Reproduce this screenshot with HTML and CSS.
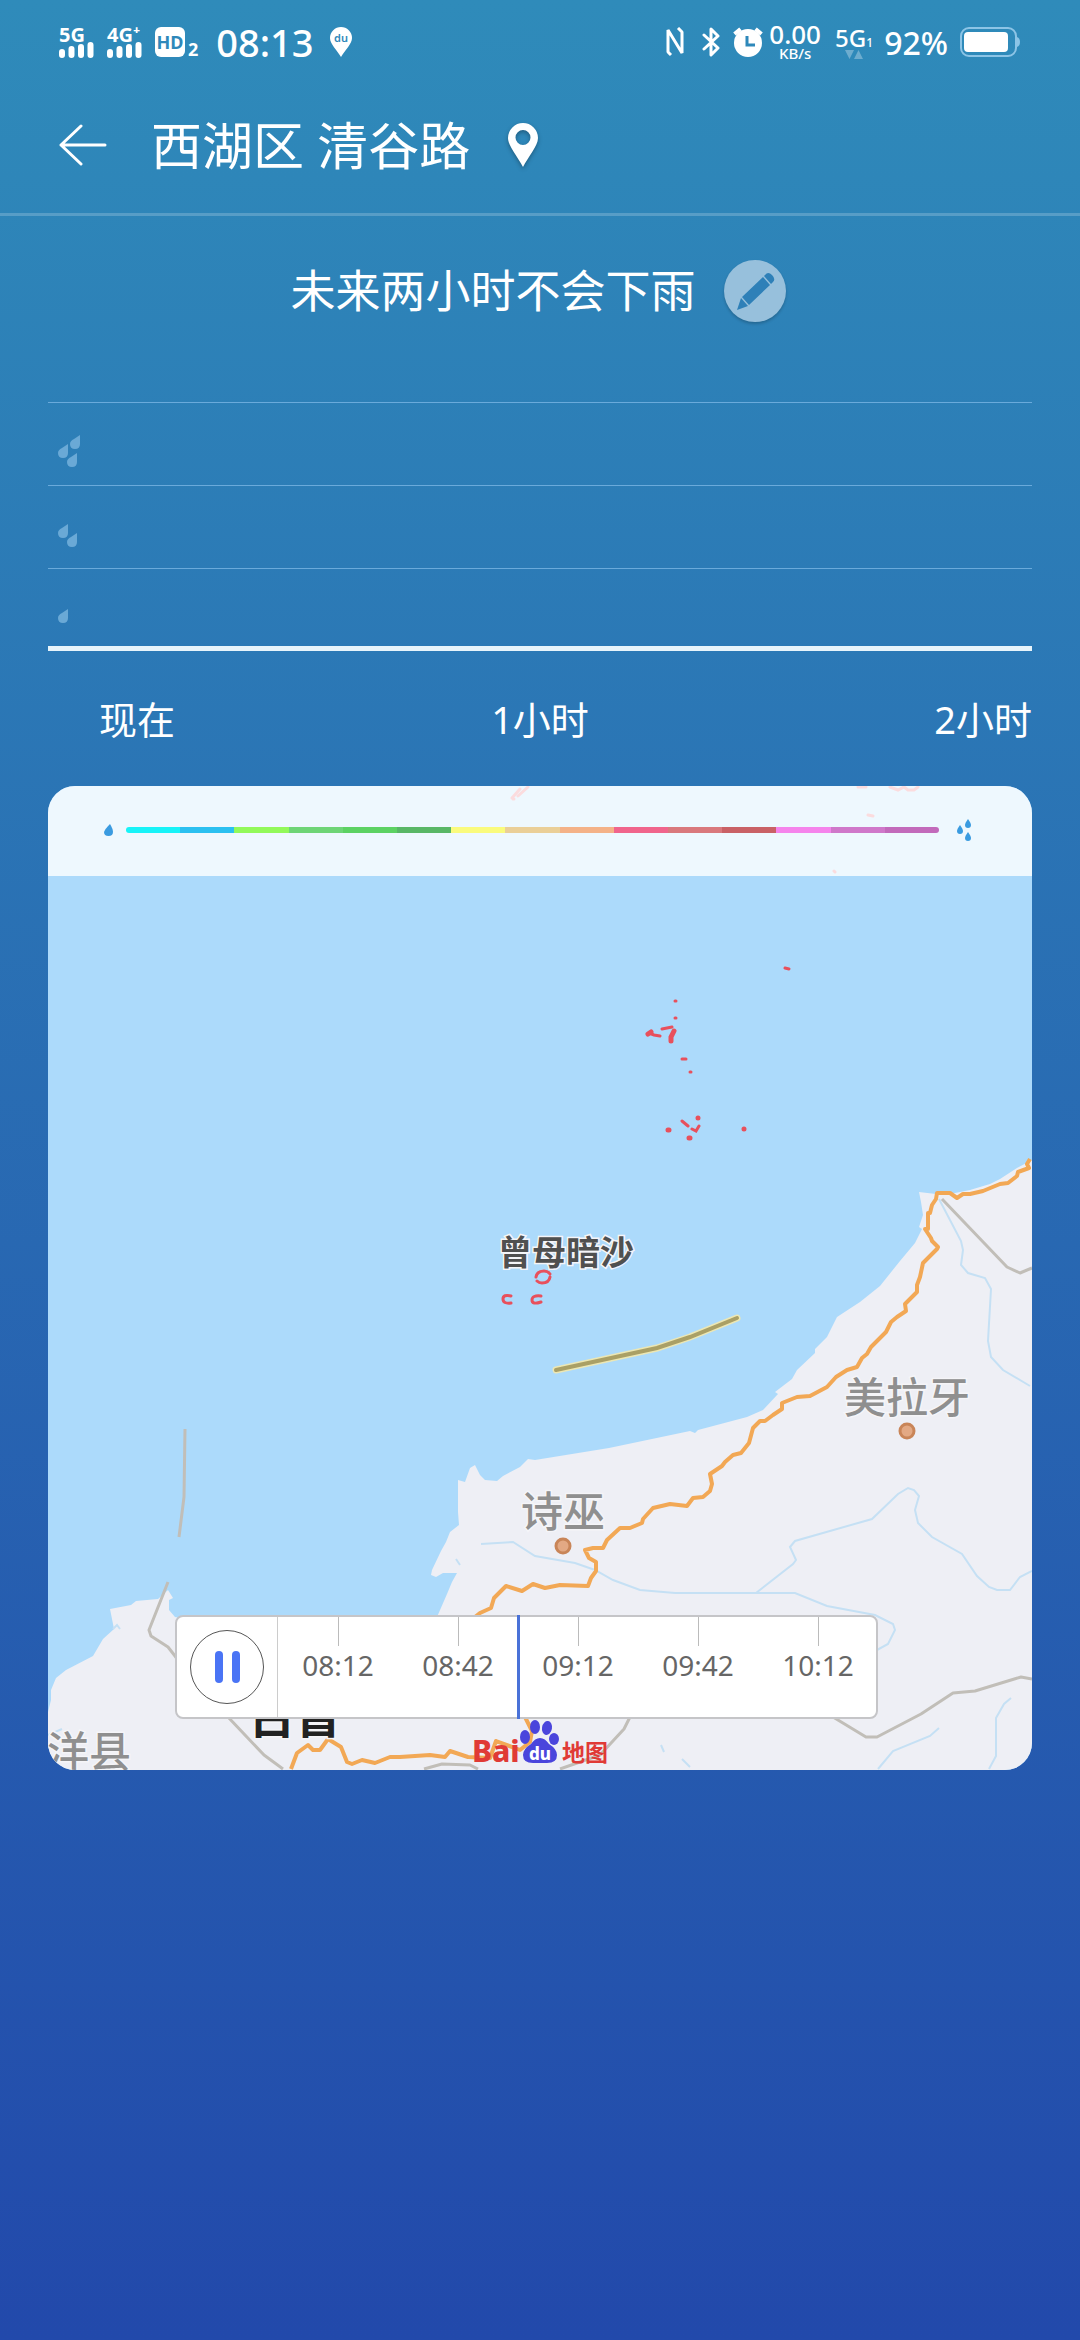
FILE: index.html
```html
<!DOCTYPE html>
<html lang="zh-CN">
<head>
<meta charset="utf-8">
<meta name="viewport" content="width=device-width, initial-scale=1">
<title>西湖区 清谷路</title>
<link rel="stylesheet" href="styles.css">
</head>
<body>
<div class="status">
  <div class="status-group">
    <div class="signal"><span>5G</span>
      <svg width="35" height="16" viewBox="0 0 35 16"><path d="M3 10v3M12.500 7v6M22 5v8M31.500 3v10" stroke="#fff" stroke-width="6" stroke-linecap="round"/></svg>
    </div>
    <div class="signal"><span>4G⁺</span>
      <svg width="35" height="16" viewBox="0 0 35 16"><path d="M3 10v3M12.500 7v6M22 5v8M31.500 3v10" stroke="#fff" stroke-width="6" stroke-linecap="round"/></svg>
    </div>
    <div class="hd"><b class="hd-badge">HD</b><b>2</b></div>
    <time class="clock">08:13</time>
    <svg width="22" height="30" viewBox="0 0 22 30"><path d="M11 0a11 11 0 0 1 11 11c0 6-7 12-11 19C7 23 0 17 0 11A11 11 0 0 1 11 0z" fill="#fff"/><text x="11" y="15" text-anchor="middle" class="pin-text">du</text></svg>
  </div>
  <div class="status-group status-right">
    <svg class="nfc" width="18" height="30" viewBox="0 0 18 30" fill="none" stroke="#fff" stroke-width="3"><path d="M5 28L2 25V3l14 23V5l-4-4" stroke-linejoin="bevel"/></svg>
    <svg class="bt" width="18" height="30" viewBox="0 0 18 30" fill="none" stroke="#fff" stroke-width="3" stroke-linejoin="round" stroke-linecap="round"><path d="M2 8l14 13-7 7V2l7 7L2 22"/></svg>
    <svg class="alarm" width="30" height="30" viewBox="0 0 30 30"><circle cx="15" cy="16" r="14" fill="#fff"/><path d="M14 9v9h8" fill="none" stroke="#2e88ba" stroke-width="3"/><path d="M1.500 7l6-5M28.500 7l-6-5" stroke="#fff" stroke-width="4"/></svg>
    <div class="speed"><span>0.00</span><small>KB/s</small></div>
    <div class="net"><span>5G<sub>1</sub></span>
      <svg width="18" height="9" viewBox="0 0 18 9" fill="#fff" fill-opacity=".3"><path d="M0 0h9L4.500 9zM9 9h9L13.500 0z"/></svg>
    </div>
    <span class="percent">92%</span>
    <svg width="60" height="30" viewBox="0 0 60 30"><rect x="1" y="1" width="55" height="28" rx="8" fill="none" stroke="#8cc4e6" stroke-width="2"/><rect x="4" y="5" width="44" height="20" rx="4" fill="#fff"/><path d="M57 10q3 1 3 5t-3 5z" fill="#8cc4e6"/></svg>
  </div>
</div>

<header class="header">
  <button class="icon-button" aria-label="返回">
    <svg width="48" height="42" viewBox="0 0 48 42" fill="none" stroke="#fff" stroke-width="3" stroke-linecap="round" stroke-linejoin="round"><path d="M22 2L2 21l20 19M2 21h44"/></svg>
  </button>
  <h1 class="title">西湖区 清谷路</h1>
  <button class="icon-button shadow" aria-label="定位">
    <svg width="30" height="44" viewBox="0 0 30 44"><path fill-rule="evenodd" fill="#fff" d="M15 0a15 15 0 0 1 15 15c0 8-10 19-15 29C10 34 0 23 0 15A15 15 0 0 1 15 0zm0 7a7.500 7.500 0 1 0 0 15 7.500 7.500 0 0 0 0-15z"/></svg>
  </button>
</header>

<main>
  <section class="summary">
    <h2 class="forecast">未来两小时不会下雨</h2>
    <button class="edit" aria-label="编辑">
      <svg width="62" height="62" viewBox="0 0 62 62" fill="#2e80b8"><path d="M39 17l7 8-21 20-7-8zM41 15q3-4 7 0 4 4 1 7l-2 2-7-8zM17 38l7 8-11 4z"/></svg>
    </button>
  </section>

  <section class="chart" aria-label="降雨量">
    <div class="level"><svg width="22" height="32" viewBox="0 0 22 32"><use href="#drop" x="12" y="0"/><use href="#drop" x="0" y="9"/><use href="#drop" x="9" y="18"/></svg></div>
    <div class="level low"><svg width="22" height="32" viewBox="0 0 22 32"><use href="#drop" x="0" y="9"/><use href="#drop" x="9" y="18"/></svg></div>
    <div class="level base"><svg width="22" height="32" viewBox="0 0 22 32"><use href="#drop" x="0" y="8"/></svg></div>
  </section>
  <div class="axis"><span class="now">现在</span><span>1小时</span><span class="end">2小时</span></div>

  <section class="map">
    <svg class="map-canvas" viewBox="48 786 984 984" aria-label="降雨地图">
      <defs>
        <path id="drop" d="M10 0v9q0 5-5 5t-5-5q0-3 4-5z"/>
        <path id="water" d="M6 0q3 5 3 8 0 4-4.500 4T0 8q1-3 6-8z"/>
      </defs>
      <rect x="48" y="786" width="984" height="984" fill="#acdafb"/>
      <path fill="#eeeff5" d="M1032 1160L1017 1168 1000 1179 990 1184 970 1190 955 1193 936 1194 919 1192 921 1202 923 1215 919 1227 922 1229 915 1243 900 1261 880 1286 860 1302 837 1317 827 1337 815 1349 815 1353 797 1370 792 1379 775 1392 778 1394 763 1410 747 1417 698 1430 695 1433 690 1431 609 1448 535 1460 528 1459 520 1467 503 1476 497 1481 485 1480 480 1475 475 1465 470 1468 465 1482 458 1480 458 1512 459 1525 450 1532 446 1542 441 1551 432 1570 431 1575 436 1577 443 1573 457 1573 452 1582 447 1594 437 1617 300 1640 175 1617 169 1610 169 1600 173 1598 168 1590 158 1599 136 1601 131 1605 110 1609 114 1629 103 1639 93 1656 66 1670 56 1678 51 1690 51 1700 48 1712V1770H1032z"/>
      <g class="river">
        <path d="M939 1199L961 1241 963 1250 961 1265 968 1273 985 1278 991 1289 988 1341 991 1357 1003 1370 1030 1386"/>
        <path d="M481 1544L513 1542 535 1556 575 1563 595 1570 613 1580 640 1590 675 1593H795L827 1606 875 1615 893 1624 895 1630 888 1644 877 1650"/>
        <path d="M756 1593L793 1564 796 1560 790 1547 795 1541 872 1519 898 1494 908 1488 914 1490 919 1496 915 1510 918 1523 932 1537 962 1554 977 1576 989 1587 997 1590H1010L1020 1577 1032 1571"/>
        <path d="M878 1769L893 1751 930 1736 939 1728M989 1769L996 1756V1718L1004 1704 1011 1698M113 1629l4-4 3 4M456 1559l4 6M48 1735l14-6M661 1745l3 7M682 1759l8 8"/>
      </g>
      <g class="border-line">
        <path d="M185 1429L184 1497 179 1537M168 1582L149 1630 151 1636 168 1647 175 1656 200 1690 228 1717 245 1735 264 1755 283 1769"/>
        <path d="M942 1199L1007 1267 1020 1273 1032 1268M833 1717L866 1737H877L921 1714 953 1693 975 1691 1021 1677 1032 1679M424 1769L442 1764 470 1765 478 1769M630 1717L624 1729 600 1755 560 1769"/>
      </g>
      <g class="road">
        <path d="M1030 1159L1027 1164 1029 1168 1018 1172 1017 1176 1008 1183 1000 1184 983 1191 970 1194 963 1194 957 1198 950 1193H937L936 1199 932 1205 930 1213H928V1229H925L931 1238 932 1241 938 1247 937 1249 923 1263 920 1277 917 1285V1292L905 1304 906 1311 897 1317 891 1322 886 1332 871 1347 867 1354 862 1358 857 1367 847 1370 836 1377 827 1387 810 1396 797 1397 782 1403V1409L773 1415 765 1421H760L753 1428 749 1443 741 1453 733 1455 725 1462 722 1466 710 1474 712 1484 710 1491 703 1497 693 1498 687 1506 670 1504 653 1508 643 1519 642 1523 630 1528H620L607 1540 603 1548H593L585 1550 589 1558 596 1562 596 1571 591 1578 588 1586 560 1585 545 1588 533 1584 522 1591 506 1586 494 1598 491 1608 480 1613 470 1621"/>
        <path d="M291 1769L297 1753 308 1745 313 1750H320L328 1739 341 1747 347 1762 352 1764 362 1760 375 1763 390 1757 400 1757 430 1755 445 1757 450 1751 468 1757 490 1758 496 1741 520 1750 530 1742 532 1731 525 1717"/>
      </g>
      <path d="M556 1370L657 1348 690 1337 737 1318" fill="none" stroke="#ece7b4" stroke-width="7" stroke-linecap="round"/>
      <path d="M556 1370L657 1348 690 1337 737 1318" fill="none" stroke="#aaa066" stroke-width="4" stroke-linecap="round"/>
      <g class="islet">
        <path stroke-width="3" d="M785 968l4 1M675 1001h1M675 1018h1M649 1033l5 2 6 1M662 1029l10-2M682 1059h4M690 1072h1M682 1121l6 5M692 1129l4 2 3-5M514 799l-1 0"/>
        <path stroke-width="5" d="M648 1034l3-2M674 1031l-3 6v4M668 1130h1M689 1138h1M698 1118h0M744 1129h0"/>
        <path stroke-width="3" d="M536 1277q1-6 8-6 4 0 6 3M550 1277q-1 6-8 6-3 0-5-2M511 1296q-8-2-8 3t8 4M541 1296q-9-1-9 4t9 2"/>
        <path stroke-width="3" d="M512 798l8-9M518 796l10-9M858 787h8M890 787l8 3 6-3 4 3h6l4-3M868 815l5 1M834 871l1 1"/>
      </g>
      <g fill="#e3a984" stroke="#c98558" stroke-width="3"><circle cx="563" cy="1546" r="7"/><circle cx="907" cy="1431" r="7"/></g>
      <g class="place">
        <text class="shoal" x="566" y="1265">曾母暗沙</text>
        <text x="563" y="1527">诗巫</text>
        <text x="907" y="1413">美拉牙</text>
        <text x="89" y="1767">洋县</text>
        <text class="city" x="295" y="1733">古晋</text>
      </g>
      <g class="baidu">
        <text class="baidu-red" x="472" y="1762">Bai</text>
        <g fill="#4a45dc"><ellipse cx="525" cy="1737" rx="5" ry="7"/><ellipse cx="535" cy="1727" rx="5" ry="7"/><ellipse cx="547" cy="1728" rx="5" ry="7" transform="rotate(10 547 1728)"/><ellipse cx="554" cy="1739" rx="5" ry="6"/><path d="M540 1738q5 0 9 6 8 5 8 11 0 8-10 8h-14q-10 0-10-8 0-6 8-11 4-6 9-6z"/></g>
        <text class="baidu-du" x="540" y="1760">du</text>
        <text class="baidu-cn" x="562" y="1761">地图</text>
      </g>
    </svg>

    <div class="legend">
      <svg width="9" height="12" viewBox="0 0 9 12" fill="#3a9be0"><use href="#water"/></svg>
      <div class="scale"><i class="c1"></i><i class="c2"></i><i class="c3"></i><i class="c4"></i><i class="c5"></i><i class="c6"></i><i class="c7"></i><i class="c8"></i><i class="c9"></i><i class="c10"></i><i class="c11"></i><i class="c12"></i><i class="c13"></i><i class="c14"></i><i class="c15"></i></div>
      <svg width="16" height="22" viewBox="0 0 16 22" fill="#3a9be0"><path d="M12 0q3 4 3 6 0 3-3 3t-3-3q0-2 3-6zM4 6q3 4 3 6 0 3-3 3t-3-3q0-2 3-6zM12 13q3 4 3 6 0 3-3 3t-3-3q0-2 3-6z"/></svg>
    </div>

    <div class="player">
      <div class="pause-cell"><button class="pause" aria-label="暂停"><i></i><i></i></button></div>
      <ol class="times"><li>08:12</li><li>08:42</li><li>09:12</li><li>09:42</li><li>10:12</li></ol>
    </div>
  </section>
</main>
</body>
</html>
```
FILE: styles.css
```css
* { box-sizing: border-box; margin: 0; padding: 0; }
html { min-height: 100%; background: linear-gradient(#2f8bba, #2249ab); }
body { min-height: 100vh; color: #fff; font-family: "Noto Sans", "Noto Sans CJK SC", sans-serif; }
svg { display: block; flex: none; }
button { border: 0; background: none; cursor: pointer; }
h1, h2 { font-weight: 400; }

.status { display: flex; justify-content: space-between; height: 80px; padding: 4px 60px 0 59px; }
.status-group { display: flex; align-items: center; gap: 12px; }
.signal { width: 36px; font-size: 20px; font-weight: 700; line-height: 16px; white-space: nowrap; }
.signal svg { margin-top: -1px; }
.hd { display: flex; align-items: flex-end; gap: 3px; font-size: 18px; line-height: 16px; }
.hd-badge { width: 30px; height: 30px; border-radius: 6px; background: #fff; color: #2e88ba; text-align: center; line-height: 30px; }
.clock { margin: 0 4px 0 6px; font-size: 38px; font-weight: 500; line-height: 40px; }
.pin-text { font-size: 11px; font-weight: 600; fill: #2e88ba; }
.bt { margin-left: 6px; }
.alarm { margin-left: 1px; }
.speed { display: flex; flex-direction: column; align-items: center; width: 52px; margin-left: -6px; font-size: 26px; font-weight: 500; line-height: 22px; }
.speed small { font-size: 15px; line-height: 16px; }
.net { display: flex; flex-direction: column; align-items: center; width: 36px; margin-left: 3px; font-size: 24px; font-weight: 500; line-height: 24px; }
.net sub { font-size: 12px; line-height: 12px; vertical-align: baseline; }
.percent { font-size: 32px; font-weight: 500; }

.header { display: flex; align-items: center; height: 136px; padding: 0 59px 4px; border-bottom: 3px solid rgba(255, 255, 255, .2); }
.title { margin: 0 38px 0 44px; font-size: 51px; line-height: 60px; }
.shadow { filter: drop-shadow(0 2px 2px rgba(0, 0, 0, .3)); }

.summary { display: flex; align-items: center; justify-content: center; gap: 28px; height: 150px; padding-right: 4px; }
.forecast { font-size: 45px; line-height: 60px; }
.edit { width: 62px; height: 62px; border-radius: 50%; background: #97c0dc; box-shadow: 0 2px 3px rgba(0, 0, 0, .2); }

.chart { margin: 36px 48px 0; }
.level { height: 83px; padding: 32px 0 0 10px; border-top: 1px solid #6aaadb; fill: #6aa9d6; }
.low { padding-top: 29px; }
.base { border-bottom: 5px solid #e7f4fb; }
.axis { display: grid; grid-template-columns: 1fr auto 1fr; margin: 0 48px; padding: 44px 0 43px; font-size: 38px; line-height: 48px; }
.now { padding-left: 51px; }
.end { text-align: right; }

.map { position: relative; margin: 0 48px; border-radius: 27px; overflow: hidden; }
.map-canvas { width: 100%; }
.river { fill: none; stroke: #c5e0f4; stroke-width: 2; }
.border-line { fill: none; stroke: #c1beb8; stroke-width: 3; stroke-linejoin: round; }
.road { fill: none; stroke: #f2a855; stroke-width: 4; stroke-linejoin: round; }
.islet { fill: none; stroke: #e8505c; stroke-linecap: round; }
.place { font-family: "Noto Sans CJK SC", sans-serif; font-size: 42px; font-weight: 500; text-anchor: middle; fill: #8f8f8f; stroke: #f5f5f8; stroke-width: 3; paint-order: stroke; }
.shoal { font-size: 34px; font-weight: 700; fill: #505050; }
.city { font-size: 46px; font-weight: 700; fill: #222; }
.baidu { font-family: "Noto Sans", "Noto Sans CJK SC", sans-serif; font-weight: 800; fill: #e03a36; }
.baidu-red { font-size: 30px; }
.baidu-du { font-size: 17px; text-anchor: middle; fill: #fff; }
.baidu-cn { font-size: 23px; font-weight: 700; }

.legend { position: absolute; top: 0; left: 0; right: 0; display: flex; align-items: center; height: 90px; padding: 0 60px 2px 56px; background: rgba(255, 255, 255, .8); }
.scale { display: flex; flex: 1; height: 6px; margin: 0 17px 0 13px; border-radius: 3px; overflow: hidden; }
.scale i { flex: 1; }
.c1 { background: #17f3f8; } .c2 { background: #2bc0f0; } .c3 { background: #92f95a; }
.c4 { background: #6ed576; } .c5 { background: #5cd263; } .c6 { background: #58b766; }
.c7 { background: #fafb7d; } .c8 { background: #eacf98; } .c9 { background: #f4b288; }
.c10 { background: #f0658c; } .c11 { background: #d9797d; } .c12 { background: #c96166; }
.c13 { background: #f584ec; } .c14 { background: #cf78ca; } .c15 { background: #c26abb; }

.player { position: absolute; left: 127px; right: 154px; bottom: 51px; display: flex; height: 104px; border: 2px solid #c5c5c8; border-radius: 8px; background: #fff; }
.pause-cell { display: flex; flex: none; align-items: center; justify-content: center; width: 101px; border-right: 1px solid #ccc; }
.pause { display: flex; align-items: center; justify-content: center; gap: 9px; width: 74px; height: 74px; border: 1px solid #555; border-radius: 50%; }
.pause i { width: 8px; height: 32px; border-radius: 4px; background: #4a74f5; }
.times { position: relative; display: flex; flex: 1; margin-right: -2px; list-style: none; }
.times li { flex: 1; color: #666; font-size: 28px; line-height: 32px; text-align: center; }
.times li::before { content: ""; display: block; width: 1px; height: 29px; margin: 0 auto 3px; background: #bbb; }
.times::after { content: ""; position: absolute; top: -2px; bottom: -2px; left: 40%; width: 3px; margin-left: -1px; background: #4a72d8; }
```
